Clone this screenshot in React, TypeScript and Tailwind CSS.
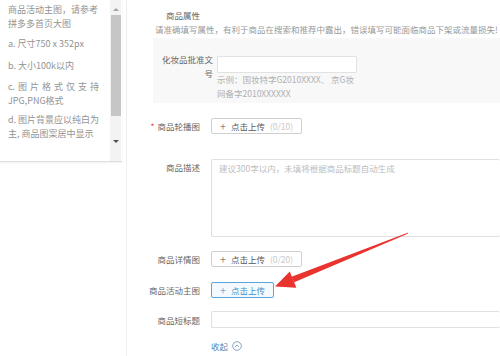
import React from "react";

const font = { fontFamily: '"Noto Sans CJK SC", "Noto Sans", sans-serif' };

function UploadBtn({ count, active }: { count?: string; active?: boolean }) {
  return (
    <div
      className={
        "flex h-[16px] items-center gap-[5px] rounded-[2px] border px-[8px] text-[8.5px] leading-none " +
        (active ? "border-[#5aa6dc] bg-[#f4f9fd] text-[#3c8fcc]" : "border-[#cfcfcf] bg-white text-[#555]")
      }
    >
      <span className="text-[11px] font-light leading-none">+</span>
      <span>点击上传</span>
      {count && <span className="text-[#c8c8c8]">{count}</span>}
    </div>
  );
}

export default function App() {
  return (
    <div className="relative flex h-[356px] w-[500px] overflow-hidden bg-white text-[#666]" style={font}>
      {/* left tips panel */}
      <div className="flex w-[127px] shrink-0 flex-col border-r border-[#eeeeee]">
        <div className="flex h-[162px] w-[122px] border-b border-[#dedede] shadow-[0_1px_2px_rgba(0,0,0,0.06)]">
          <div className="w-[110px] pl-[8px] pr-[4px] text-[9px] leading-[14px] text-[#939393]">
            <p className="mt-[3px]">
              商品活动主图，请参考
              <br />
              拼多多首页大图
            </p>
            <p className="mt-[6px]">a. 尺寸750 x 352px</p>
            <p className="mt-[8px]">b. 大小100k以内</p>
            <div className="mt-[7px]">
              <div className="flex w-[91px] justify-between">
                <span>c.</span>
                <span>图</span>
                <span>片</span>
                <span>格</span>
                <span>式</span>
                <span>仅</span>
                <span>支</span>
                <span>持</span>
              </div>
              <div>JPG,PNG格式</div>
            </div>
            <p className="mt-[5px]">
              d. 图片背景应以纯白为
              <br />
              主, 商品图案居中显示
            </p>
          </div>
          {/* scrollbar */}
          <div className="flex w-[11px] flex-col items-center bg-[#f3f3f3]">
            <div className="mt-[8px] h-0 w-0 border-x-[3px] border-b-[3px] border-x-transparent border-b-[#a3a3a3]" />
            <div className="mt-[4px] h-[101px] w-[10px] bg-[#c6c6c6]" />
            <div className="mt-[24px] h-0 w-0 border-x-[3px] border-t-[3px] border-x-transparent border-t-[#505050]" />
          </div>
        </div>
      </div>

      {/* main form */}
      <div className="flex min-w-0 flex-1 flex-col">
        <div className="ml-[39px] mt-[8px] text-[8.5px] leading-[14px] text-[#666]">商品属性</div>
        <div className="ml-[28px] whitespace-nowrap text-[8.5px] leading-[14px] text-[#999]">
          请准确填写属性，有利于商品在搜索和推荐中露出，错误填写可能面临商品下架或流量损失!
        </div>

        <div className="ml-[26px] mt-[2px] flex h-[65px] items-start bg-[#f8f8f8] pl-[7px] pt-[14px]">
          <div className="w-[53px] text-right text-[8.5px] leading-[14px] text-[#666]">化妆品批准文号</div>
          <div className="ml-[4px] mt-[4px] flex flex-col">
            <div className="h-[17px] w-[140px] rounded-[1px] border border-[#e2e2e2] bg-white" />
            <div className="mt-[-1px] text-[8.5px] leading-[14px] text-[#b0b0b0]">
              示例：国妆特字G2010XXXX、 京G妆
              <br />
              网备字2010XXXXXX
            </div>
          </div>
        </div>

        <div className="mt-[15px] flex items-center gap-[11px]">
          <div className="w-[73px] text-right text-[8.5px] leading-[14px]">
            <span className="mr-[3px] text-[#e54545]">*</span>商品轮播图
          </div>
          <UploadBtn count="(0/10)" />
        </div>

        <div className="mt-[25px] flex items-start gap-[11px]">
          <div className="w-[73px] pt-[1px] text-right text-[8.5px] leading-[14px]">商品描述</div>
          <div className="h-[78px] flex-1 rounded-[2px] border border-r-0 border-[#e0e0e0] pl-[7px] pt-[1px] text-[8.5px] leading-[14px] text-[#bdbdbd]">
            建议300字以内，未填将根据商品标题自动生成
          </div>
        </div>

        <div className="mt-[14px] flex items-center gap-[11px]">
          <div className="w-[73px] text-right text-[8.5px] leading-[14px]">商品详情图</div>
          <UploadBtn count="(0/20)" />
        </div>

        <div className="mt-[15px] flex items-center gap-[11px]">
          <div className="w-[73px] text-right text-[8.5px] leading-[14px]">商品活动主图</div>
          <UploadBtn active />
        </div>

        <div className="mt-[13px] flex items-center gap-[11px]">
          <div className="w-[73px] text-right text-[8.5px] leading-[14px]">商品短标题</div>
          <div className="h-[17px] flex-1 rounded-[2px] border border-r-0 border-[#e0e0e0]" />
        </div>

        <div className="ml-[84px] mt-[11px] flex items-center gap-[4px] text-[8.5px] leading-[14px] text-[#5b82b0]">
          <span>收起</span>
          <svg width="10" height="10" viewBox="0 0 10 10" fill="none">
            <circle cx="5" cy="5" r="4.3" stroke="#6b8fbb" strokeWidth="0.8" />
            <path d="M3 6 L5 4 L7 6" stroke="#6b8fbb" strokeWidth="0.8" />
          </svg>
        </div>
      </div>

      {/* red annotation arrow */}
      <svg className="pointer-events-none absolute left-0 top-0" width="500" height="356" viewBox="0 0 500 356">
        <polygon
          points="408.3,232.5 407.7,233.7 294.2,282.2 291.6,276.8"
          fill="#e8332f"
        />
        <polygon points="275,286.5 289.8,271.5 296.4,287.8" fill="#e8332f" />
      </svg>
    </div>
  );
}
